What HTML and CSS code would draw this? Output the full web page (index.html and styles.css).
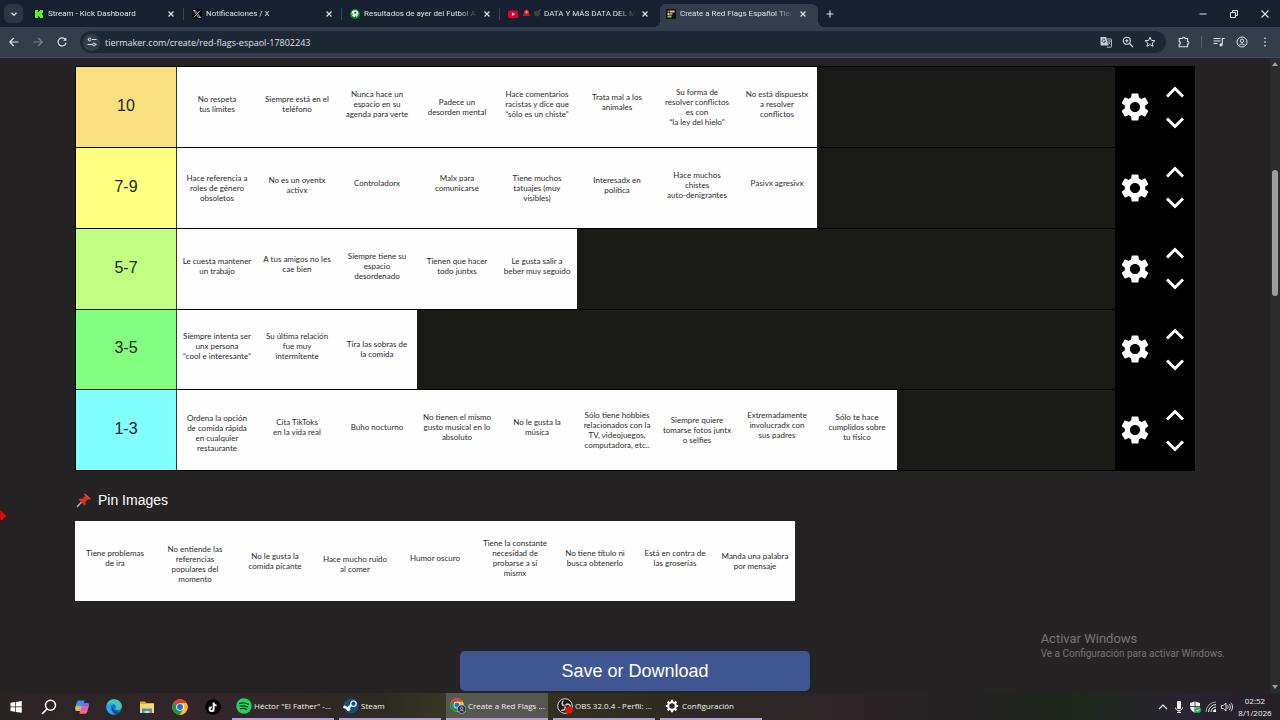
FILE: index.html
```html
<!DOCTYPE html>
<html lang="es">
<head>
  <meta charset="UTF-8">
  <meta name="viewport" content="width=device-width, initial-scale=1.0">
  <title>Create a Red Flags Español Tier List</title>
  <link rel="stylesheet" href="styles.css">
</head>
<body>

  <svg class="defs" aria-hidden="true">
    <symbol id="gear" viewBox="0 0 24 24">
      <path d="M19.14 12.94c.04-.3.06-.61.06-.94 0-.32-.02-.64-.07-.94l2.03-1.58c.18-.14.23-.41.12-.61l-1.92-3.32c-.12-.22-.37-.29-.59-.22l-2.39.96c-.5-.38-1.03-.7-1.62-.94l-.36-2.54c-.04-.24-.24-.41-.48-.41h-3.84c-.24 0-.43.17-.47.41l-.36 2.54c-.59.24-1.13.57-1.62.94l-2.39-.96c-.22-.08-.47 0-.59.22L2.74 8.87c-.12.21-.08.47.12.61l2.03 1.58c-.05.3-.09.63-.09.94s.02.64.07.94l-2.03 1.58c-.18.14-.23.41-.12.61l1.92 3.32c.12.22.37.29.59.22l2.39-.96c.5.38 1.03.7 1.62.94l.36 2.54c.05.24.24.41.48.41h3.84c.24 0 .44-.17.47-.41l.36-2.54c.59-.24 1.13-.56 1.62-.94l2.39.96c.22.08.47 0 .59-.22l1.92-3.32c.12-.22.07-.47-.12-.61l-2.01-1.58zM12 15.6c-1.98 0-3.6-1.62-3.6-3.6s1.62-3.6 3.6-3.6 3.6 1.62 3.6 3.6-1.62 3.6-3.6 3.6z"/>
    </symbol>
    <symbol id="up" viewBox="0 0 20 12"><path d="M2 10.5l8-8 8 8" fill="none" stroke="currentColor" stroke-width="3"/></symbol>
    <symbol id="down" viewBox="0 0 20 12"><path d="M2 1.5l8 8 8-8" fill="none" stroke="currentColor" stroke-width="3"/></symbol>
    <symbol id="close" viewBox="0 0 10 10"><path d="M2.5 2.5l5 5m0-5l-5 5" fill="none" stroke="currentColor" stroke-width="1.2"/></symbol>
    <symbol id="chrome" viewBox="0 0 48 48">
      <circle cx="24" cy="24" r="23" fill="#fbc116"/>
      <path d="M24 24L4.1 12.5A23 23 0 0 1 43.9 12.5H24z" fill="#e33b2e"/>
      <path d="M4.1 12.5A23 23 0 0 0 24 47l10-17.2-10-5.8z" fill="#229342"/>
      <path d="M24 12.5h19.9A23 23 0 0 1 24 47l10-17.2z" fill="#fbc116"/>
      <circle cx="24" cy="24" r="11.5" fill="#fff"/>
      <circle cx="24" cy="24" r="9" fill="#1a73e8"/>
    </symbol>
  </svg>

  <header class="browser">
    <div class="tab-strip">
      <button class="tab-search" aria-label="Buscar pestañas"><svg viewBox="0 0 10 10"><path d="M2.5 3.8L5 6.3l2.5-2.5" fill="none" stroke="currentColor" stroke-width="1.4"/></svg></button>
      <div class="tab">
        <svg class="favicon" viewBox="0 0 10 10"><path d="M0 0h10v10H0z" fill="#081408"/><path d="M1 1h3v2h1V2h1V1h3v3H8v2h1v3H6V8H5V7H4v2H1z" fill="#53fc18"/></svg>
        <a href="#" class="tab-title">Stream - Kick Dashboard</a>
        <button class="tab-close" aria-label="Cerrar"><svg><use href="#close"/></svg></button>
      </div>
      <div class="tab">
        <svg class="favicon" viewBox="0 0 10 10"><path d="M0 0h10v10H0z" fill="#0a0a0a"/><path d="M1.5 1.5h1.7l5.3 7H6.8zM8.2 1.5L5.6 4.4M4.4 5.6L1.7 8.5" fill="none" stroke="#ddd" stroke-width=".8"/></svg>
        <a href="#" class="tab-title">Notificaciones / X</a>
        <button class="tab-close" aria-label="Cerrar"><svg><use href="#close"/></svg></button>
      </div>
      <div class="tab">
        <svg class="favicon" viewBox="0 0 10 10"><circle cx="5" cy="5" r="5" fill="#0c8a20"/><circle cx="5" cy="4.6" r="3.4" fill="#f2fff2"/><path d="M4 3.4l1.2-.8 1.3.8-.4 1.4H4.5zM1.8 4l1.4 1-.4 1.7zM7.2 5.6l1.1-.8-.6 2zM4.3 7l1.4-.4.5 1.3z" fill="#0b6a1b"/></svg>
        <a href="#" class="tab-title">Resultados de ayer del Futbol A</a>
        <button class="tab-close" aria-label="Cerrar"><svg><use href="#close"/></svg></button>
      </div>
      <div class="tab no-line">
        <svg class="favicon" viewBox="0 0 10 10"><rect y="1.5" width="10" height="7.5" rx="1.8" fill="#e8002d"/><path d="M4 3.6l2.8 1.7L4 7z" fill="#fff"/></svg>
        <a href="#" class="tab-title">
          <svg class="emoji" viewBox="0 0 10 10"><path d="M2.5 7V4.5a2.5 2.5 0 0 1 5 0V7z" fill="#f0322f"/><path d="M1 7h8v1.8H1z" fill="#b9231f"/><path d="M4.2 3.5h1.6v2H4.2z" fill="#ffb3a5"/></svg>
          <svg class="emoji" viewBox="0 0 10 10"><circle cx="4.5" cy="6" r="3.2" fill="#3b4148"/><path d="M6.5 4l2-2.5" stroke="#8a7a60" stroke-width="1"/></svg>
          DATA Y MÁS DATA DEL M</a>
        <button class="tab-close" aria-label="Cerrar"><svg><use href="#close"/></svg></button>
      </div>
      <div class="tab active">
        <svg class="favicon" viewBox="0 0 10 10"><path d="M0 0h10v10H0z" fill="#12130f"/><path d="M1.5 1.5h2v2h-2z" fill="#e5695e"/><path d="M4 1.5h4.5v2H4z" fill="#e3c08a"/><path d="M1.5 4h2v2h-2z" fill="#e8cf5e"/><path d="M4 4h2.5v2H4z" fill="#a98f5a"/><path d="M1.5 6.5h4v2h-4z" fill="#7fc96b"/></svg>
        <a href="#" class="tab-title">Create a Red Flags Español Tier</a>
        <button class="tab-close" aria-label="Cerrar"><svg><use href="#close"/></svg></button>
      </div>
      <button class="new-tab" aria-label="Nueva pestaña"><svg viewBox="0 0 10 10"><path d="M5 1.5v7M1.5 5h7" stroke="currentColor" stroke-width="1.2"/></svg></button>
      <div class="window-controls">
        <button aria-label="Minimizar"><svg viewBox="0 0 10 10"><path d="M1.5 5h7" stroke="currentColor"/></svg></button>
        <button aria-label="Restaurar"><svg viewBox="0 0 10 10"><path d="M1.5 3.5h5v5h-5zM3.5 3.5v-2h5v5h-2" fill="none" stroke="currentColor"/></svg></button>
        <button aria-label="Cerrar ventana"><svg viewBox="0 0 10 10"><path d="M1.5 1.5l7 7m0-7l-7 7" stroke="currentColor" stroke-width="1.1"/></svg></button>
      </div>
    </div>

    <div class="toolbar">
      <div class="nav">
        <button aria-label="Atrás"><svg viewBox="0 0 12 12"><path d="M10.5 6H2M5.8 2L1.8 6l4 4" fill="none" stroke="currentColor" stroke-width="1.2"/></svg></button>
        <button aria-label="Adelante" disabled><svg viewBox="0 0 12 12"><path d="M1.5 6H10M6.2 2l4 4-4 4" fill="none" stroke="currentColor" stroke-width="1.2"/></svg></button>
        <button aria-label="Recargar"><svg viewBox="0 0 12 12"><path d="M9.6 4A4 4 0 1 0 10 6.8" fill="none" stroke="currentColor" stroke-width="1.2"/><path d="M10.3 1.5v3.3H7z" fill="currentColor"/></svg></button>
      </div>
      <div class="omnibox">
        <button class="site-info" aria-label="Información del sitio"><svg viewBox="0 0 12 12"><path d="M2 3.5h1.2M6 3.5h4.5M1.5 8.5H6M8.8 8.5h1.7" stroke="currentColor" stroke-width="1.1"/><circle cx="3.6" cy="3.5" r="1.4" fill="none" stroke="currentColor"/><circle cx="8" cy="8.5" r="1.4" fill="none" stroke="currentColor"/></svg></button>
        <input type="text" aria-label="Dirección" value="tiermaker.com/create/red-flags-espaol-17802243">
        <button aria-label="Traducir"><svg viewBox="0 0 12 12"><path d="M.5 1h5.700l2.300 8.500h-7A1 1 0 0 1 .5 8.500z" fill="#c3cad6"/><path d="M7 3h4a.6.6 0 0 1 .5.600v7a.6.6 0 0 1-.6.600H6.800" fill="none" stroke="#c3cad6" stroke-width=".9"/><path d="M5.200 3.800A1.700 1.700 0 1 0 5.500 5.300H4" fill="none" stroke="#3a4454" stroke-width=".9"/><path d="M7.700 5h3M9.200 4.200V5m1 0c-.2 1.500-1 2.500-2 3.200M8.300 6.200l2 2.300" fill="none" stroke="#c3cad6" stroke-width=".7"/></svg></button>
        <button aria-label="Zoom"><svg viewBox="0 0 12 12"><circle cx="4.8" cy="4.8" r="3.5" fill="none" stroke="currentColor" stroke-width="1.1"/><path d="M7.500 7.500L11 11M3.200 4.800h3.200M4.800 3.200v3.200" stroke="currentColor" stroke-width="1.1"/></svg></button>
        <button aria-label="Favorito"><svg viewBox="0 0 12 12"><path d="M6 1.200l1.400 3.200 3.500.3-2.700 2.300.9 3.400L6 8.600l-3.100 1.800.9-3.400L1.100 4.700l3.500-.3z" fill="none" stroke="currentColor"/></svg></button>
      </div>
      <div class="tools">
        <button aria-label="Extensiones"><svg viewBox="0 0 12 12"><path d="M1.200 2.500h3.200c0-1.700 2.600-1.700 2.600 0h2.500v3c1.900 0 1.900 2.600 0 2.600v2.700H1.200V8.200c1.600-.2 1.600-2.400 0-2.600z" fill="none" stroke="currentColor" stroke-width="1.1"/></svg></button>
        <span class="divider"></span>
        <button aria-label="Multimedia"><svg viewBox="0 0 12 12"><path d="M.5 2.500h7M.5 5h7M.5 7.500h4M9.300 8.500V2.500h2.400" fill="none" stroke="currentColor" stroke-width="1.1"/><circle cx="8" cy="8.800" r="1.6" fill="currentColor"/></svg></button>
        <button aria-label="Perfil"><svg viewBox="0 0 12 12"><circle cx="6" cy="6" r="5" fill="none" stroke="currentColor"/><circle cx="6" cy="4.8" r="1.7" fill="none" stroke="currentColor"/><path d="M2.700 9.500c1.500-2 5.100-2 6.600 0" fill="none" stroke="currentColor"/></svg></button>
        <button aria-label="Menú"><svg viewBox="0 0 12 12"><path d="M5.300 1.500h1.400v1.400H5.300zM5.300 5.300h1.400v1.400H5.300zM5.300 9.100h1.400v1.400H5.300z" fill="currentColor"/></svg></button>
      </div>
    </div>
  </header>

  <div class="viewport">
    <main class="page">
      <section class="board">
        <div class="tier">
          <div class="tier-label tier-10">10</div>
          <ul class="tiles">
            <li>No respeta<br>tus límites</li>
            <li>Siempre está en el<br>teléfono</li>
            <li>Nunca hace un<br>espacio en su<br>agenda para verte</li>
            <li class="mid">Padece un<br>desorden mental</li>
            <li>Hace comentarios<br>racistas y dice que<br>“sólo es un chiste”</li>
            <li class="high">Trata mal a los<br>animales</li>
            <li class="mid">Su forma de<br>resolver conflictos<br>es con<br>“la ley del hielo”</li>
            <li>No está dispuestx<br>a resolver<br>conflictos</li>
          </ul>
          <div class="tier-controls">
            <button class="settings" aria-label="Ajustes"><svg><use href="#gear"/></svg></button>
            <div class="arrows">
              <button aria-label="Subir"><svg><use href="#up"/></svg></button>
              <button aria-label="Bajar"><svg><use href="#down"/></svg></button>
            </div>
          </div>
        </div>

        <div class="tier">
          <div class="tier-label tier-7">7-9</div>
          <ul class="tiles">
            <li class="mid">Hace referencia a<br>roles de género<br>obsoletos</li>
            <li>No es un oyentx<br>activx</li>
            <li class="high">Controladorx</li>
            <li class="high">Malx para<br>comunicarse</li>
            <li class="mid">Tiene muchos<br>tatuajes (muy<br>visibles)</li>
            <li>Interesadx en<br>política</li>
            <li>Hace muchos<br>chistes<br>auto-denigrantes</li>
            <li class="high">Pasivx agresivx</li>
          </ul>
          <div class="tier-controls">
            <button class="settings" aria-label="Ajustes"><svg><use href="#gear"/></svg></button>
            <div class="arrows">
              <button aria-label="Subir"><svg><use href="#up"/></svg></button>
              <button aria-label="Bajar"><svg><use href="#down"/></svg></button>
            </div>
          </div>
        </div>

        <div class="tier">
          <div class="tier-label tier-5">5-7</div>
          <ul class="tiles">
            <li>Le cuesta mantener<br>un trabajo</li>
            <li class="high">A tus amigos no les<br>cae bien</li>
            <li>Siempre tiene su<br>espacio<br>desordenado</li>
            <li>Tienen que hacer<br>todo juntxs</li>
            <li>Le gusta salir a<br>beber muy seguido</li>
          </ul>
          <div class="tier-controls">
            <button class="settings" aria-label="Ajustes"><svg><use href="#gear"/></svg></button>
            <div class="arrows">
              <button aria-label="Subir"><svg><use href="#up"/></svg></button>
              <button aria-label="Bajar"><svg><use href="#down"/></svg></button>
            </div>
          </div>
        </div>

        <div class="tier">
          <div class="tier-label tier-3">3-5</div>
          <ul class="tiles">
            <li>Siempre intenta ser<br>unx persona<br>“cool e interesante”</li>
            <li>Su última relación<br>fue muy<br>intermitente</li>
            <li class="mid">Tira las sobras de<br>la comida</li>
          </ul>
          <div class="tier-controls">
            <button class="settings" aria-label="Ajustes"><svg><use href="#gear"/></svg></button>
            <div class="arrows">
              <button aria-label="Subir"><svg><use href="#up"/></svg></button>
              <button aria-label="Bajar"><svg><use href="#down"/></svg></button>
            </div>
          </div>
        </div>

        <div class="tier">
          <div class="tier-label tier-1">1-3</div>
          <ul class="tiles">
            <li class="low">Ordena la opción<br>de comida rápida<br>en cualquier<br>restaurante</li>
            <li>Cita TikToks<br>en la vida real</li>
            <li>Buho nocturno</li>
            <li>No tienen el mismo<br>gusto musical en lo<br>absoluto</li>
            <li>No le gusta la<br>música</li>
            <li class="mid">Sólo tiene hobbies<br>relacionados con la<br>TV, videojuegos,<br>computadora, etc..</li>
            <li class="mid">Siempre quiere<br>tomarse fotos juntx<br>o selfies</li>
            <li class="high">Extremadamente<br>involucradx con<br>sus padres</li>
            <li>Sólo te hace<br>cumplidos sobre<br>tu físico</li>
          </ul>
          <div class="tier-controls">
            <button class="settings" aria-label="Ajustes"><svg><use href="#gear"/></svg></button>
            <div class="arrows">
              <button aria-label="Subir"><svg><use href="#up"/></svg></button>
              <button aria-label="Bajar"><svg><use href="#down"/></svg></button>
            </div>
          </div>
        </div>
      </section>

      <section class="pins">
        <h2>
          <svg viewBox="0 0 16 16"><path d="M1 15l5.500-6" stroke="#b8bdc4" stroke-width="1.2"/><path d="M9 1.500l5.500 5-1 1-1.300-.2-2.700 2.500.2 3-1 1L2.500 7.500l1-1 3 .3L9.200 4 8.200 2.500z" fill="#d6311d"/><path d="M9 1.500l5.500 5-1 1-5.300-5z" fill="#ef4c31"/></svg>
          Pin Images
        </h2>
        <ul class="tiles">
          <li>Tiene problemas<br>de ira</li>
          <li class="low">No entiende las<br>referencias<br>populares del<br>momento</li>
          <li class="mid">No le gusta la<br>comida picante</li>
          <li class="low">Hace mucho ruido<br>al comer</li>
          <li>Humor oscuro</li>
          <li>Tiene la constante<br>necesidad de<br>probarse a sí<br>mismx</li>
          <li>No tiene título ni<br>busca obtenerlo</li>
          <li>Está en contra de<br>las groserías</li>
          <li class="mid">Manda una palabra<br>por mensaje</li>
        </ul>
      </section>

      <button class="save">Save or Download</button>
    </main>

    <div class="scrollbar">
      <svg viewBox="0 0 8 6"><path d="M4 1l3 4H1z"/></svg>
      <div class="track"><div class="thumb"></div></div>
      <svg viewBox="0 0 8 6"><path d="M1 1h6L4 5z"/></svg>
    </div>

    <div class="watermark">
      <strong>Activar Windows</strong>
      <span>Ve a Configuración para activar Windows.</span>
    </div>
    <svg class="cursor" viewBox="0 0 8 14"><path d="M0 1l7.500 8-3.500.7L2 13l-2-2z" fill="#e00b12" stroke="#4a0508" stroke-width=".6"/></svg>
  </div>

  <footer class="taskbar">
    <div class="launchers">
      <button aria-label="Inicio"><svg viewBox="0 0 16 16"><path d="M2.500 3.800l4.700-.7v4.500H2.500zM7.900 3l5.900-.9v5.500H7.900zM2.500 8.300h4.700v4.500l-4.700-.7zM7.900 8.300h5.900v5.500L7.900 13z" fill="#fff"/></svg></button>
      <button aria-label="Buscar"><svg viewBox="0 0 16 16"><circle cx="9.500" cy="6.300" r="5" fill="none" stroke="#fff" stroke-width="1.5"/><path d="M6 10L1 15" stroke="#fff" stroke-width="1.7"/></svg></button>
      <button aria-label="Copilot"><svg viewBox="0 0 16 16"><path d="M5 1.500h5.500l-3 10.500H3.200C.8 12 .8 9.500 1.500 7.500l1.300-4C3.300 2 4 1.500 5 1.500z" fill="#2a9be8"/><path d="M2 6.500L1.500 8C.8 10.500 1.500 12 3.200 12h4l1.300-4.500z" fill="#d9b93a"/><path d="M8.800 4h4c2.400 0 2.400 2.500 1.700 4.500l-1.300 4c-.5 1.500-1.200 2-2.200 2H5.500z" fill="#d860c0"/><path d="M8.800 4h4c1.800 0 2.200 1.300 2 3H8z" fill="#7f66e0"/><path d="M6.200 12h7.200c-.5 1.700-1.300 2.500-2.400 2.500H5.500z" fill="#f3705c"/></svg></button>
      <button aria-label="Edge"><svg viewBox="0 0 16 16"><circle cx="8" cy="8" r="7.8" fill="#1976c9"/><path d="M.4 7C1.200 2.500 4.500.2 8 .2c4.500 0 7.800 3.300 7.800 6.800 0 2.500-1.800 4-4 4-1.800 0-2.500-.8-2.300-1.400 1-1.200.6-4.100-2.200-4.600C4.500 4.500 1.500 5 .4 7z" fill="#45c7b8"/><path d="M.4 7c1.500-2.500 5-3 7-1.800C3.500 5.500 3.500 12 9 15.700 3.500 16 .2 12 .4 7z" fill="#2ea6e6"/><path d="M7.500 7c-1.500 3 1.500 7 6.800 5.500C11 17 6 14 5.800 10.500 5.700 9 6.300 7.700 7.500 7z" fill="#114a8b"/></svg></button>
      <button aria-label="Explorador"><svg viewBox="0 0 16 16"><path d="M1 2.500h5l1.500 1.500H15v9H1z" fill="#e9a825"/><path d="M1 5h14v9H1z" fill="#ffd766"/><path d="M3 9.500h10V14h-2.500v-2h-5v2H3z" fill="#3c96dd"/></svg></button>
      <button aria-label="Chrome"><svg><use href="#chrome"/></svg></button>
      <button aria-label="TikTok"><svg viewBox="0 0 16 16"><circle cx="8" cy="8" r="7.8" fill="#000"/><g fill="none" stroke-width="1.5"><path d="M8.300 3.500V10a2 2 0 1 1-2-2M8.300 3.500c.1 1.700 1.300 2.700 2.700 2.800" stroke="#25f4ee"/><path d="M9 4v6.500a2 2 0 1 1-2-2M9 4c.1 1.700 1.300 2.700 2.700 2.800" stroke="#fe2c55"/><path d="M8.700 3.800v6.500a2 2 0 1 1-2-2M8.700 3.800c.1 1.700 1.300 2.700 2.700 2.800" stroke="#fff"/></g></svg></button>
    </div>
    <div class="tasks">
      <button class="task"><svg viewBox="0 0 16 16"><circle cx="8" cy="8" r="7.7" fill="#1ed760"/><path d="M3.500 5.500c3-.9 6.500-.6 9 .9M4 8.200c2.600-.7 5.400-.4 7.600.8M4.400 10.700c2.300-.5 4.400-.3 6.200.8" fill="none" stroke="#10301b" stroke-width="1.3" stroke-linecap="round"/></svg><span>Héctor "El Father" -...</span></button>
      <button class="task"><svg viewBox="0 0 16 16"><circle cx="8" cy="8" r="7.5" fill="#155078"/><path d="M.5 8.500l4.500 2 3.500-4" fill="none" stroke="#e9f1f7" stroke-width="2.5"/><circle cx="10.500" cy="5.700" r="2.7" fill="#155078" stroke="#fff" stroke-width="1.2"/><circle cx="5.500" cy="11" r="2" fill="#fff"/></svg><span>Steam</span></button>
      <button class="task current"><svg viewBox="0 0 16 16"><use href="#chrome" width="14" height="14"/><circle cx="11.700" cy="11.200" r="4.3" fill="#25303d" stroke="#b6c3d2" stroke-width=".8"/><circle cx="11.700" cy="10.300" r="1.3" fill="none" stroke="#b6c3d2" stroke-width=".8"/><path d="M9.300 13.600c1-1.700 3.800-1.700 4.800 0" fill="none" stroke="#b6c3d2" stroke-width=".8"/></svg><span>Create a Red Flags ...</span></button>
      <button class="task"><svg viewBox="0 0 16 16"><circle cx="8" cy="8" r="7.3" fill="#151515" stroke="#ddd"/><path d="M7.500 7.500C4.500 7.500 4.500 4 6.500 2.800M8.500 7.500c1.500-2.500 4.800-1.200 5 1.200M7.800 8.500c1.500 2.500-1.200 4.500-3.600 3.600" fill="none" stroke="#ccc" stroke-width="1.5"/><circle cx="12" cy="12" r="3.8" fill="#e80f12"/></svg><span>OBS 32.0.4 - Perfil: ...</span></button>
      <button class="task"><svg viewBox="0 0 16 16"><circle cx="8" cy="8" r="3.8" fill="none" stroke="#fff" stroke-width="2"/><path d="M8 1.800v2.200M8 12v2.200M1.800 8H4M12 8h2.200M3.600 3.600l1.600 1.600M10.800 10.800l1.600 1.600M12.400 3.600l-1.600 1.600M5.200 10.800l-1.600 1.600" stroke="#fff" stroke-width="2.2"/></svg><span>Configuración</span></button>
    </div>
    <div class="tray">
      <svg viewBox="0 0 12 12"><path d="M2 8l4-4 4 4" fill="none" stroke="currentColor" stroke-width="1.1"/></svg>
      <svg viewBox="0 0 12 12"><rect x="4" y="0" width="4" height="8" rx="1" fill="currentColor"/><path d="M2.500 6.500c0 4 7 4 7 0M6 9.500V12M4 11.500h4" fill="none" stroke="currentColor"/></svg>
      <svg viewBox="0 0 12 12"><path d="M6 .5l5 1.500v3.500c0 3-2 5-5 6.200-3-1.200-5-3.200-5-6.200V2z" fill="#f2f2f2"/><path d="M6 .5v11M1 5.500h10" stroke="#2a2530" stroke-width=".8"/><circle cx="9" cy="9" r="3" fill="#23b04c"/><path d="M7.500 9l1.200 1.200 1.800-2" fill="none" stroke="#fff" stroke-width=".9"/></svg>
      <svg viewBox="0 0 12 12"><g fill="none" stroke="currentColor"><path d="M1 11A10 10 0 0 1 11 1" opacity=".6"/><path d="M3.500 11A7.500 7.500 0 0 1 11 3.500M6 11a5 5 0 0 1 5-5"/></g><path d="M8 11a3 3 0 0 1 3-3v3z" fill="currentColor"/></svg>
      <svg viewBox="0 0 12 12"><path d="M.5 4.500h1.800L5 2v8L2.300 7.500H.5zM6.500 4.300c.9 1 .9 2.400 0 3.400M8.200 3c1.600 1.700 1.600 4.300 0 6M9.800 1.700c2.300 2.500 2.300 6.100 0 8.600" fill="none" stroke="currentColor" stroke-width=".9"/></svg>
      <div class="clock"><time>02:52</time><time>8/1/2026</time></div>
    </div>
  </footer>

</body>
</html>
```

FILE: styles.css
```css
:root {
  --strip: #172030;
  --toolbar: #343d4c;
  --omnibox: #1d2735;
  --page: #252324;
  --tier-bg: #1a1a17;
  --ui-text: #dde2ea;
  --save: #3f5692;
}

* {
  box-sizing: border-box;
  margin: 0;
  padding: 0;
}

body {
  display: flex;
  flex-direction: column;
  height: 100vh;
  overflow: hidden;
  background: var(--page);
  font-family: "Liberation Sans", Arial, sans-serif;
}

button {
  display: flex;
  align-items: center;
  justify-content: center;
  flex-shrink: 0;
  background: none;
  border: none;
  color: inherit;
  font-family: inherit;
  cursor: pointer;
}

ul {
  list-style: none;
}

svg {
  display: block;
  flex-shrink: 0;
}

.defs {
  position: absolute;
  width: 0;
  height: 0;
}

/* Browser chrome */
.browser {
  background: var(--strip);
  color: var(--ui-text);
  font-family: "Open Sans", "Segoe UI", sans-serif;
}

.tab-strip {
  display: flex;
  align-items: flex-end;
  height: 27px;
  padding-left: 4px;
}

.tab-search {
  width: 19px;
  height: 19px;
  margin: 0 5px 4px 0;
  border-radius: 6px;
  background: #2c3645;
}

.tab-search svg,
.new-tab svg,
.window-controls svg,
.tab-close svg {
  width: 10px;
  height: 10px;
}

.tab {
  position: relative;
  display: flex;
  align-items: center;
  gap: 4px;
  flex: 0 1 158px;
  min-width: 0;
  height: 23px;
  padding: 0 10px 4px 6px;
}

.tab::after {
  content: "";
  width: 1px;
  height: 12px;
  position: absolute;
  right: 2px;
  top: 4px;
  background: #3a4454;
}

.tab.no-line::after {
  display: none;
}

.tab.active {
  background: var(--toolbar);
  border-radius: 6px 6px 0 0;
}

.tab.active::before,
.tab.active::after {
  content: "";
  position: absolute;
  top: auto;
  bottom: 0;
  width: 6px;
  height: 6px;
}

.tab.active::before {
  left: -6px;
  background: radial-gradient(circle at 0 0, transparent 6px, var(--toolbar) 6px);
}

.tab.active::after {
  right: -6px;
  background: radial-gradient(circle at 100% 0, transparent 6px, var(--toolbar) 6px);
}

.favicon {
  width: 10px;
  height: 10px;
}

.tab-title {
  flex: 1;
  min-width: 0;
  overflow: hidden;
  color: inherit;
  font-family: Roboto, "Segoe UI", sans-serif;
  font-size: 8px;
  line-height: 12px;
  text-decoration: none;
  white-space: nowrap;
  -webkit-mask-image: linear-gradient(to right, #000 84%, transparent);
  mask-image: linear-gradient(to right, #000 84%, transparent);
}

.emoji {
  display: inline-block;
  width: 9px;
  height: 9px;
  vertical-align: -1px;
}

.new-tab {
  width: 20px;
  height: 19px;
  margin: 0 0 4px 2px;
}

.window-controls {
  display: flex;
  margin-left: auto;
}

.window-controls button {
  width: 31px;
  height: 27px;
}

.toolbar {
  display: flex;
  align-items: center;
  height: 31px;
  background: var(--toolbar);
  border-bottom: 1px solid #474c56;
}

.toolbar svg {
  width: 12px;
  height: 12px;
}

.nav {
  display: flex;
  gap: 4px;
  padding: 0 8px 0 4px;
}

.nav button {
  width: 20px;
  height: 20px;
}

.nav button:disabled {
  color: #788290;
}

.omnibox {
  display: flex;
  align-items: center;
  flex: 1;
  min-width: 0;
  gap: 10px;
  height: 22px;
  padding: 0 10px 0 3px;
  border-radius: 11px;
  background: var(--omnibox);
}

.omnibox input {
  flex: 1;
  min-width: 0;
  margin-left: -5px;
  background: none;
  border: none;
  outline: none;
  color: var(--ui-text);
  font-family: inherit;
  font-size: 9px;
}

.site-info {
  width: 17px;
  height: 17px;
  border-radius: 50%;
  background: #343d4c;
}

.tools {
  display: flex;
  align-items: center;
  gap: 11px;
  padding: 0 9px 0 12px;
}

.divider {
  width: 1px;
  height: 12px;
  background: #576070;
}

/* Page */
.viewport {
  position: relative;
  display: flex;
  flex: 1;
  min-height: 0;
}

.page {
  display: flex;
  flex-direction: column;
  align-items: center;
  flex: 1;
  min-width: 0;
  padding-top: 8px;
  overflow: hidden;
}

.board,
.pins {
  width: 100%;
  max-width: 1120px;
}

.board {
  display: flex;
  flex-direction: column;
  min-height: 405px;
  border: 1px solid #000;
  border-right: none;
}

.tier {
  display: flex;
  flex: 1;
  min-height: 80px;
}

.tier + .tier {
  border-top: 1px solid #000;
}

.tier-label {
  display: flex;
  align-items: center;
  justify-content: center;
  flex-shrink: 0;
  width: 101px;
  padding-bottom: 2px;
  border-right: 1px solid #333;
  color: #222;
  font-size: 16px;
}

.tier-10 { background: #f9df80; }
.tier-7 { background: #ffff80; }
.tier-5 { background: #c0ff80; }
.tier-3 { background: #82ff80; }
.tier-1 { background: #82ffff; }

.tiles {
  display: flex;
  flex: 1;
  min-width: 0;
  background: var(--tier-bg);
}

.tiles li {
  display: flex;
  flex-direction: column;
  justify-content: center;
  width: 80px;
  min-height: 79px;
  padding-bottom: 6px;
  background: #fefefe;
  color: #2b2b2b;
  font-family: Lato, sans-serif;
  font-size: 8px;
  line-height: 10px;
  text-align: center;
  white-space: nowrap;
}

/* Where the caption sits on the card */
.tiles .high {
  padding-bottom: 10px;
}

.tiles .mid {
  padding-bottom: 0;
}

.tiles .low {
  padding-top: 5px;
  padding-bottom: 0;
}

.tier-controls {
  display: flex;
  width: 80px;
  background: #000;
  color: #fff;
}

.settings,
.arrows {
  width: 40px;
}

.settings svg {
  width: 34px;
  height: 34px;
  fill: #fff;
}

.arrows {
  display: flex;
  flex-direction: column;
  align-items: center;
  justify-content: center;
  gap: 19px;
}

.arrows svg {
  width: 20px;
  height: 12px;
}

.pins h2 {
  display: flex;
  align-items: center;
  gap: 6px;
  padding: 20px 0 12px 1px;
  color: #fff;
  font-size: 14px;
  font-weight: 400;
  line-height: 18px;
}

.pins h2 svg {
  width: 16px;
  height: 16px;
}

.pins .tiles {
  background: none;
}

.pins .tiles li {
  min-height: 80px;
}

.save {
  width: 350px;
  height: 40px;
  margin-top: 50px;
  border-radius: 5px;
  background: var(--save);
  color: #fff;
  font-size: 18px;
}

.scrollbar {
  display: flex;
  flex-direction: column;
  align-items: center;
  width: 10px;
  padding: 3px 0;
  background: #2c2c2c;
}

.scrollbar svg {
  width: 8px;
  height: 6px;
  fill: #a0a0a0;
}

.track {
  flex: 1;
  padding-top: 103px;
}

.thumb {
  width: 6px;
  height: 126px;
  border-radius: 3px;
  background: #9d9d9d;
}

.watermark {
  position: absolute;
  right: 55px;
  bottom: 32px;
  display: flex;
  flex-direction: column;
  color: #767576;
  font-family: Roboto, "Segoe UI", sans-serif;
  font-size: 10px;
  line-height: 14px;
}

.watermark strong {
  font-size: 13px;
  font-weight: 400;
  line-height: 16px;
}

.cursor {
  position: absolute;
  left: 0;
  top: 450px;
  width: 8px;
  height: 14px;
}

/* Windows taskbar */
.taskbar {
  display: flex;
  height: 27px;
  background: linear-gradient(to right, #2b2425 0%, #33262a 18%, #2d2a23 30%, #353823 35%, #33301f 42%, #2c2923 55%, #2d2428 66%, #232322 78%, #1f291c 84%, #2a2333 93%, #232126 100%);
  color: #f1f1f1;
  font-family: "Open Sans", "Segoe UI", sans-serif;
}

.launchers {
  display: grid;
  grid-template-columns: repeat(7, 1fr);
  width: 229px;
}

.launchers svg,
.task svg {
  width: 16px;
  height: 16px;
}

.tasks {
  display: flex;
  gap: 5px;
  padding-left: 3px;
}

.task {
  justify-content: flex-start;
  gap: 2px;
  width: 102px;
  padding: 0 4px;
  border-bottom: 2px solid #b39fd9;
  font-size: 8px;
  white-space: nowrap;
}

.task.current {
  background: #575752;
}

.tray {
  display: flex;
  align-items: center;
  gap: 4px;
  margin-left: auto;
  padding-right: 7px;
}

.tray svg {
  width: 12px;
  height: 12px;
}

.clock {
  display: flex;
  flex-direction: column;
  align-items: center;
  width: 36px;
  font-size: 8px;
  line-height: 12px;
}
```
